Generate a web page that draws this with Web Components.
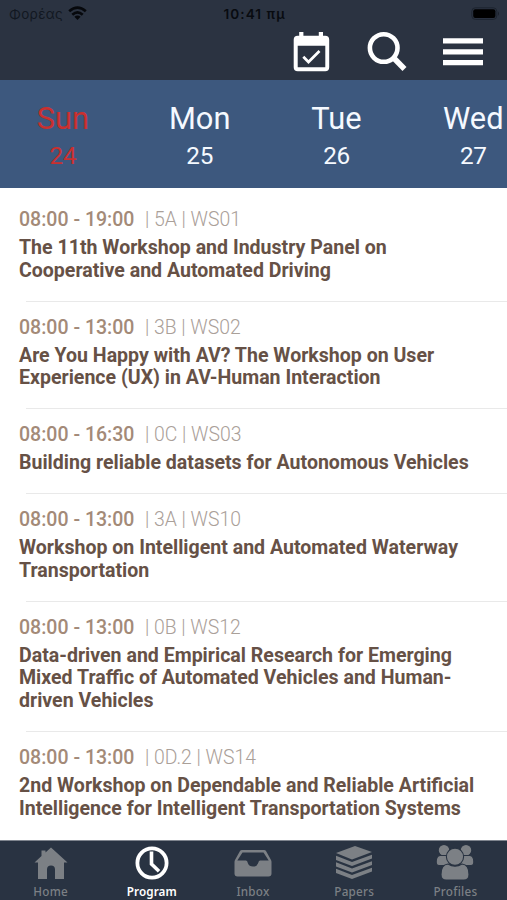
<!DOCTYPE html>
<html lang="en">
<head>
<meta charset="utf-8">
<title>Program</title>
<style>
html,body{margin:0;height:100%;overflow:hidden;background:#fff;font-family:Roboto,"Liberation Sans",sans-serif}
</style>
</head>
<body>
<program-app></program-app>
<script>
function define(name, html, setup) {
  const t = document.createElement('template');
  t.innerHTML = html;
  customElements.define(name, class extends HTMLElement {
    connectedCallback() {
      if (this.shadowRoot) return;
      this.attachShadow({mode: 'open'}).append(t.content.cloneNode(true));
      if (setup) setup(this, this.shadowRoot);
    }
  });
}

define('status-bar', `
<style>
:host{display:grid;grid-template-columns:1fr auto 1fr;align-items:center;height:28px;padding:0 7px 0 9px;box-sizing:border-box;color:#0a0e15;font:13.5px/28px Inter,"Noto Sans",sans-serif}
.left{display:flex;align-items:center;gap:5px;color:#121821;letter-spacing:.3px}
.left svg{margin-bottom:2px}
.time{font-weight:600;font-size:13.6px;letter-spacing:1.05px;color:#080b10}
.bat{justify-self:end}
svg{display:block}
</style>
<div class="left"><span>Φορέας</span>
<svg width="19" height="15" viewBox="0 0 19 15" fill="none" stroke="#06080c" stroke-width="2.7"><path d="M1.2 5.3Q9.5-2 17.8 5.3M4.3 8.7Q9.5 4.2 14.7 8.7"/><path d="M6.4 10.7Q9.5 8.5 12.6 10.7L9.5 14Z" fill="#06080c" stroke="none"/></svg></div>
<span class="time">10:41 πμ</span>
<svg class="bat" width="30" height="14" viewBox="0 0 30 14"><rect x="1.8" y=".8" width="25" height="11.6" rx="3.5" fill="none" stroke="#1d242f"/><rect x="3.2" y="2.2" width="22.2" height="8.8" rx="2" fill="#000"/><path d="M28 4.4Q29.9 6.6 28 8.8Z" fill="#1a202b"/></svg>`);

define('tool-bar', `
<style>
:host{display:flex;justify-content:flex-end;gap:36px;height:52px;padding:3px 24px 0 0;box-sizing:border-box}
svg{display:block}
.cal{margin-right:1px}
</style>
<svg class="cal" width="37" height="42" viewBox="0 0 37 42"><path fill="#fff" fill-rule="evenodd" d="M6.2 1h4.2v3.8h15.4V1H30v3.8h2.2a4 4 0 0 1 4 4v27.4a4 4 0 0 1-4 4H4.7a4 4 0 0 1-4-4V8.800a4 4 0 0 1 4-4h1.500ZM4.700 14.700v21.500H32.300V14.700Z"/><path d="M10.300 25.700l5.200 5.300L26.500 20" fill="none" stroke="#fff" stroke-width="2.700"/></svg>
<svg width="40" height="42" viewBox="0 0 40 42" fill="none" stroke="#fff"><circle cx="16.700" cy="17" r="13.800" stroke-width="4.600"/><path d="M26.500 26.800L37.500 38" stroke-width="5.600"/></svg>
<svg width="40" height="42" viewBox="0 0 40 42" fill="#fff"><path d="M0 7.200h40v5.300H0zM0 18.200h40v5.300H0zM0 29h40v5.200H0z"/></svg>`);

define('day-tab', `
<style>
:host{flex:0 0 136.800px;display:flex;flex-direction:column;align-items:center;color:#f5f9ff;padding-top:21px;box-sizing:border-box}
:host([active]){color:#c9302f}
.day{font-size:30.800px;line-height:36px}
.num{font-size:24.300px;line-height:30px;margin-top:4px;letter-spacing:-.3px}
</style><span class="day"><slot></slot></span><span class="num"><slot name="num"></slot></span>`);

define('day-strip', `
<style>:host{display:flex;height:108px;background:#3d587e;overflow:hidden}
.in{display:flex;margin-left:-5.500px}</style><div class="in"><slot></slot></div>`);

define('session-item', `
<style>
:host{display:block;padding:14px 0 0 19px}
.meta{display:flex;white-space:pre;font-size:19.550px;line-height:23px;height:23px;color:#aaa099;font-weight:300}
.t{color:#a38a78;font-weight:500;margin-right:10.500px}
.m{font-size:19.400px}
.title{font-weight:700;font-size:19.560px;line-height:22.800px;color:#665146;margin-top:5.950px;white-space:pre}
.line{height:1px;background:#e9e9e9;margin:18.100px 0 0 7px}
:host(:last-of-type) .line{display:none}
</style>
<div class="meta"><span class="t"></span><span class="m"></span></div>
<div class="title"></div><div class="line"></div>`, (el, r) => {
  r.querySelector('.t').textContent = el.getAttribute('time');
  r.querySelector('.m').textContent = el.getAttribute('place');
  r.querySelector('.title').textContent = el.getAttribute('heading').replaceAll('/', '\n');
});

define('session-list', `<style>:host{display:block;flex:1;padding-top:5.950px;box-sizing:border-box;overflow:hidden;min-height:0}</style><slot></slot>`);

define('nav-tab', `
<style>
:host{flex:1;display:flex;flex-direction:column;align-items:center;color:#7c8085;font:500 11.700px/14px "Noto Sans",sans-serif;letter-spacing:.25px}
:host([active]){color:#fff;font-weight:600;letter-spacing:.1px}
.i{height:38px;display:flex;align-items:center;margin-top:3.400px}
.l{margin-top:1.800px}
::slotted(svg){display:block}
</style><span class="i"><slot name="icon"></slot></span><span class="l"><slot></slot></span>`);

define('nav-bar', `<style>:host{display:flex;height:60px;background:#293342;border-top:1px solid #7f858e;padding-right:1px;box-sizing:border-box}</style><slot></slot>`);

define('program-app', `
<style>
:host{display:flex;flex-direction:column;width:507px;height:900px;background:#fff;overflow:hidden}
header{background:#2b3341;height:80px;flex:none}
day-strip,nav-bar{flex:none}
</style>
<header><status-bar></status-bar><tool-bar></tool-bar></header>
<day-strip>
<day-tab active>Sun<span slot="num">24</span></day-tab>
<day-tab>Mon<span slot="num">25</span></day-tab>
<day-tab>Tue<span slot="num">26</span></day-tab>
<day-tab>Wed<span slot="num">27</span></day-tab>
</day-strip>
<session-list>
<session-item time="08:00 - 19:00" place="| 5A | WS01" heading="The 11th Workshop and Industry Panel on/Cooperative and Automated Driving"></session-item>
<session-item time="08:00 - 13:00" place="| 3B | WS02" heading="Are You Happy with AV? The Workshop on User/Experience (UX) in AV-Human Interaction"></session-item>
<session-item time="08:00 - 16:30" place="| 0C | WS03" heading="Building reliable datasets for Autonomous Vehicles"></session-item>
<session-item time="08:00 - 13:00" place="| 3A | WS10" heading="Workshop on Intelligent and Automated Waterway/Transportation"></session-item>
<session-item time="08:00 - 13:00" place="| 0B | WS12" heading="Data-driven and Empirical Research for Emerging/Mixed Traffic of Automated Vehicles and Human-/driven Vehicles"></session-item>
<session-item time="08:00 - 13:00" place="| 0D.2 | WS14" heading="2nd Workshop on Dependable and Reliable Artificial/Intelligence for Intelligent Transportation Systems"></session-item>
</session-list>
<nav-bar>
<nav-tab>Home<svg slot="icon" width="34" height="34" viewBox="0 0 34 34" fill="#7c8085"><path d="M17 1.500L33.500 16.500H30V33H21V23.500a4 4 0 0 0-8 0V33H4V16.500H.5L7.500 10V4.500h4V6.500Z"/></svg></nav-tab>
<nav-tab active>Program<svg slot="icon" width="34" height="34" viewBox="0 0 34 34" fill="none" stroke="#fff"><circle cx="17" cy="17" r="14.600" stroke-width="3.800"/><path d="M16.500 5.500V18L24 25.200" stroke-width="3.600"/></svg></nav-tab>
<nav-tab>Inbox<svg slot="icon" width="38" height="34" viewBox="0 0 38 34"><path fill="#7c8085" fill-rule="evenodd" d="M8 4H30Q31.500 4 32 5L37 14Q37.500 15 37.500 16V27.500a3 3 0 0 1-3 3H3.500a3 3 0 0 1-3-3V16Q.5 15 1 14L6 5Q6.500 4 8 4ZM8.500 6.500L3.300 14.500H12Q13.300 14.500 14 17.500Q15 20.500 19 20.500T24 17.500Q24.700 14.500 26 14.500H34.700L29.500 6.500Z"/></svg></nav-tab>
<nav-tab>Papers<svg slot="icon" width="38" height="36" viewBox="0 0 38 36" fill="#7c8085"><path d="M1 8L20 1L37 7L17 14.500ZM1 10.700L17 17L37 9.700V13.500L17 21L1 15ZM1 17.200L17 23.500L37 16.200V20L17 27.500L1 21.500ZM1 23.700L17 30L37 22.700V26.500L17 34L1 28Z"/></svg></nav-tab>
<nav-tab>Profiles<svg slot="icon" width="38" height="38" viewBox="0 0 38 38" fill="#7c8085" stroke="#293342" stroke-width="1.100"><circle cx="8" cy="6.200" r="5.800"/><circle cx="30" cy="6.200" r="5.800"/><path d="M4 11.500H11L15 21.500H3Q.2 21.500 .2 18Q.2 12 4 11.500ZM34 11.500H27L23 21.500H35Q37.800 21.500 37.800 18Q37.800 12 34 11.500Z"/><circle cx="19" cy="12.700" r="8.600"/><path d="M12 20Q19 24.500 26 20Q33 20.500 33 30.500Q33 36 28 36H10Q5 36 5 30.500Q5 20.500 12 20Z"/></svg></nav-tab>
</nav-bar>`);
</script>
</body>
</html>
